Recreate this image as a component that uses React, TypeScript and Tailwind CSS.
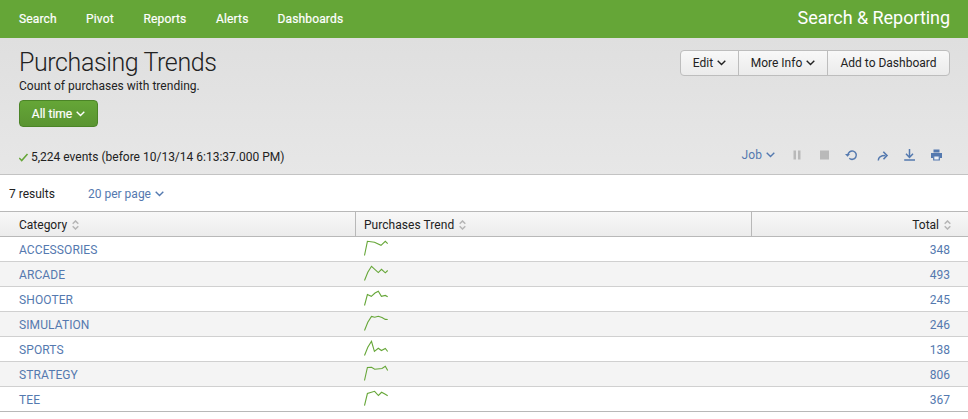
import type { ReactNode } from "react";

const rows: { name: string; points: string; total: number }[] = [
  { name: "ACCESSORIES", points: "0.5,15.5 3.4,1.3 10.5,2.2 17,5.3 21.3,1.3 23.7,3.6", total: 348 },
  { name: "ARCADE", points: "0.5,15.5 3.8,7.3 7.5,1.3 14.3,7.6 17.5,4.3 21.3,7.8 23.7,5.5", total: 493 },
  { name: "SHOOTER", points: "0.5,15.5 3.4,4.5 7.3,6.3 11,3 14.3,1.3 17.4,6.3 21.3,5.4 23.7,6.8", total: 245 },
  { name: "SIMULATION", points: "0.5,15.5 3.8,7.3 7.5,1.5 10.7,2.3 14.3,1.3 18,2.5 21.3,4.4 23.7,4.5", total: 246 },
  { name: "SPORTS", points: "0.5,15.5 3.8,7.3 7.5,1.3 10.4,11.4 14.3,8.3 17.4,10.5 21.3,8.4 23.7,11.5", total: 138 },
  { name: "STRATEGY", points: "0.5,15.5 3.4,2.5 7.5,2.4 10.7,4.3 18,3.5 21.3,1.3 23.7,5.6", total: 806 },
  { name: "TEE", points: "0.5,15.5 3.4,3.5 10.6,1.3 14.4,5.5 17.6,2.3 21.3,4.3 23.7,5.7", total: 367 },
];

function Chevron() {
  return (
    <svg width="9" height="6" viewBox="0 0 9 6" fill="none" stroke="currentColor" strokeWidth="1.4" className="shrink-0">
      <path d="M0.7 0.8 4.5 4.6 8.3 0.8" />
    </svg>
  );
}

function Sorter() {
  return (
    <svg width="7" height="10" viewBox="0 0 7 10" fill="none" stroke="#b5b5b5" strokeWidth="1.5" className="shrink-0">
      <path d="M0.7 3.8 3.5 1 6.3 3.8M0.7 6.2 3.5 9 6.3 6.2" />
    </svg>
  );
}

function ToolIcon({ children }: { children: ReactNode }) {
  return (
    <svg width="14" height="14" viewBox="0 0 14 14" fill="none" className="shrink-0">
      {children}
    </svg>
  );
}

export default function App() {
  return (
    <div className="h-[419px] w-[968px] overflow-hidden bg-white font-['Roboto',sans-serif] text-[12px] leading-4 text-[#222]">
      <nav className="flex h-[38px] items-center justify-between bg-[#65a637] pl-[19px] pr-[18px] text-white">
        <div className="flex tracking-[0.15px] [-webkit-text-stroke:0.2px_white]">
          <a className="w-[67px]">Search</a>
          <a className="w-[57.5px]">Pivot</a>
          <a className="w-[72.5px]">Reports</a>
          <a className="w-[61.5px]">Alerts</a>
          <a>Dashboards</a>
        </div>
        <div className="pb-0.5 text-[18px] leading-6 tracking-[-0.05px]">Search &amp; Reporting</div>
      </nav>

      <header className="h-[137px] border-b border-[#c3c3c3] bg-linear-to-b from-[#dfdfdf] to-[#e7e7e7] pl-[19px] pr-[18px]">
        <div className="flex h-[62px] justify-between pt-3">
          <div>
            <h1 className="h-7 text-[25px] font-light leading-[26px] tracking-[-0.4px] text-[#222]">Purchasing Trends</h1>
            <p className="tracking-[0.03px]">Count of purchases with trending.</p>
          </div>
          <div className="flex h-[26px] w-[270px] rounded border border-[#bdbdbd] bg-linear-to-b from-[#f8f8f8] to-[#ebebeb]">
            <button className="flex w-[58px] items-center justify-center gap-1 border-r border-[#bdbdbd]">Edit <Chevron /></button>
            <button className="flex w-[89px] items-center justify-center gap-1 border-r border-[#bdbdbd]">More Info <Chevron /></button>
            <button className="flex-1">Add to Dashboard</button>
          </div>
        </div>
        <button className="flex h-[27px] w-[79px] items-center justify-center gap-1 rounded border border-[#4b8427] bg-linear-to-b from-[#65a637] to-[#5a9431] pt-px text-white [-webkit-text-stroke:0.2px_white]">
          All time <Chevron />
        </button>
        <div className="mt-4 flex h-6 items-center justify-between">
          <div className="flex items-center gap-[2px] pt-1">
            <svg width="10" height="9" viewBox="0 0 10 9" fill="none" stroke="#65a637" strokeWidth="1.5">
              <path d="M0.2 5 2.7 7.6 8.5 1" />
            </svg>
            5,224 events (before 10/13/14 6:13:37.000 PM)
          </div>
          <div className="flex items-center pr-[6px] text-[#5479af]">
            <button className="mr-[15px] flex items-center gap-1 tracking-[0.1px]">Job <Chevron /></button>
            <span className="mr-[14px] flex"><ToolIcon><path d="M3.5 2.5H6v9H3.5zM8 2.5h2.5v9H8z" fill="#b9b9b9" /></ToolIcon></span>
            <span className="mr-[13px] flex"><ToolIcon><path d="M2 2.5h9v9H2z" fill="#b9b9b9" /></ToolIcon></span>
            <span className="mr-[17px] flex"><ToolIcon>
              <path d="M2.9 7a4.2 4.2 0 1 1 1.4 3.3" stroke="currentColor" strokeWidth="1.5" />
              <path d="M0 6h5L2.6 8.8z" fill="currentColor" />
            </ToolIcon></span>
            <span className="mr-[13px] flex"><ToolIcon>
              <path d="M2.3 12.4C2.3 9.2 4.5 7.6 9.5 7.6" stroke="currentColor" strokeWidth="1.5" />
              <path d="M7.3 3.8 11 7.5 7.5 11.2" stroke="currentColor" strokeWidth="1.6" />
            </ToolIcon></span>
            <span className="mr-[13px] flex"><ToolIcon>
              <path d="M6.5 1v8M3 5.8l3.5 3.6L10 5.8M1.2 12h10.8" stroke="currentColor" strokeWidth="1.5" />
            </ToolIcon></span>
            <ToolIcon>
              <path d="M3.5 1.5h6v3h-6zM1 5h11v5h-2V8H3v2H1z" fill="currentColor" />
              <path d="M3.7 8h5.6v4H3.7z" fill="#edf1f6" stroke="currentColor" strokeWidth="1.2" />
            </ToolIcon>
          </div>
        </div>
      </header>

      <div className="flex h-9 items-center pl-[9px] pt-0.5">
        <span className="w-[79px]">7 results</span>
        <button className="flex items-center gap-1 text-[#5479af]">20 per page <Chevron /></button>
      </div>

      <div className="grid h-[26px] grid-cols-[356px_396px_216px] border-y border-[#b8b8b8] bg-linear-to-b from-[#f8f8f8] to-[#ececec]">
        <div className="flex items-center gap-[5px] border-r border-[#b8b8b8] pl-[19px] pt-px">Category <Sorter /></div>
        <div className="flex items-center gap-[5px] border-r border-[#b8b8b8] pl-2 pt-px tracking-[0.05px]">Purchases Trend <Sorter /></div>
        <div className="flex items-center justify-end gap-[5px] pr-[17px] pt-px">Total <Sorter /></div>
      </div>
      {rows.map((row) => (
        <div
          key={row.name}
          className="grid h-[25px] grid-cols-[356px_396px_216px] items-center border-b border-[#d0d0d0] text-[#5479af] last:border-[#b8b8b8] even:bg-[#f4f4f4] odd:bg-white"
        >
          <a className="pl-[19px] pt-px tracking-[0.1px]">{row.name}</a>
          <div className="pb-[2px] pl-2">
            <svg width="25" height="17" viewBox="0 0 25 17" className="block">
              <polyline points={row.points} fill="none" stroke="#65a637" strokeWidth="1.1" />
            </svg>
          </div>
          <a className="pr-[18px] pt-px text-right">{row.total}</a>
        </div>
      ))}
    </div>
  );
}
